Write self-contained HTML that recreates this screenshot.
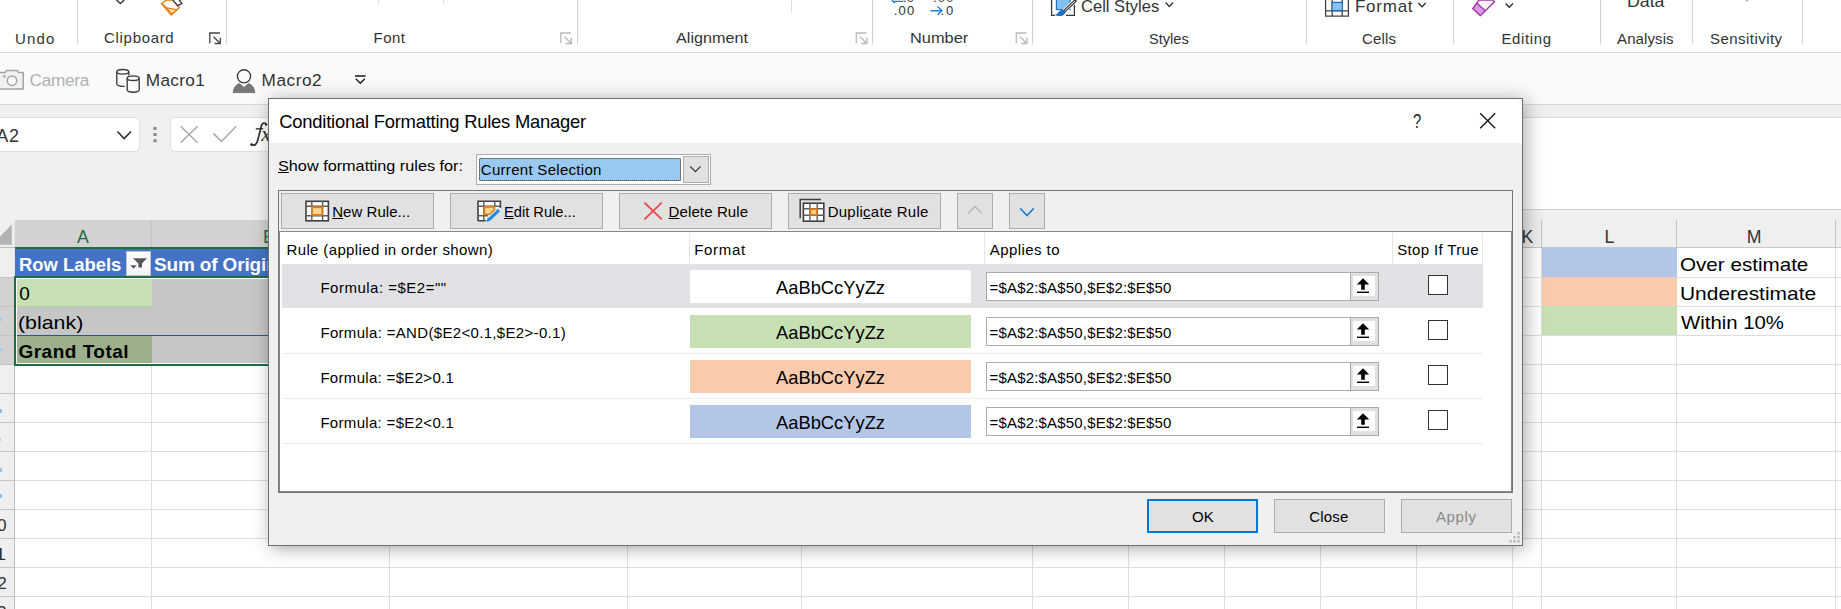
<!DOCTYPE html>
<html><head><meta charset="utf-8"><title>Conditional Formatting Rules Manager</title>
<style>
html,body{margin:0;padding:0;}
body{width:1841px;height:609px;overflow:hidden;position:relative;background:#fff;font-family:"Liberation Sans",sans-serif;}
.t{position:absolute;white-space:pre;}
.t u{text-decoration:underline;text-underline-offset:1px;text-decoration-thickness:1px;}
.a{position:absolute;box-sizing:border-box;}
.vs{position:absolute;width:1px;background:#d2d2d2;}
.hl{position:absolute;height:1px;}
.btn{position:absolute;box-sizing:border-box;background:#e1e1e1;border:1px solid #adadad;z-index:12;}
.fmt{position:absolute;left:690px;width:281px;height:33px;z-index:12;}
.inp{position:absolute;box-sizing:border-box;left:986px;width:393px;height:29px;border:1px solid #adadad;background:#fff;z-index:12;}
.ref{position:absolute;box-sizing:border-box;left:1350px;width:29px;height:29px;border:1.5px solid #a9a9a9;background:#e1e1e1;z-index:13;}
.ref i{position:absolute;left:1.5px;top:3.2px;width:22.3px;height:19.4px;background:#fff;}
.chk{position:absolute;box-sizing:border-box;left:1428px;width:20px;height:20px;border:1.4px solid #333;background:#fff;z-index:12;}
svg{position:absolute;overflow:visible;}

</style></head><body>
<!-- ===== Ribbon ===== -->
<div class="a" style="left:0;top:0;width:1841px;height:52px;background:#fff;"></div>
<div class="hl" style="left:0;top:52px;width:1841px;background:#dadada;"></div>
<div class="a" style="left:0;top:53px;width:1841px;height:51px;background:#fafafa;"></div>
<div class="hl" style="left:0;top:104px;width:1841px;background:#d8d8d8;"></div>
<div class="a" style="left:0;top:105px;width:1841px;height:115px;background:#f0f0f0;"></div>
<!-- group separators -->
<div class="vs" style="left:77px;top:0;height:44px;"></div>
<div class="vs" style="left:226px;top:0;height:44px;"></div>
<div class="vs" style="left:577px;top:0;height:44px;"></div>
<div class="vs" style="left:872px;top:0;height:44px;"></div>
<div class="vs" style="left:1032px;top:0;height:44px;"></div>
<div class="vs" style="left:1306px;top:0;height:44px;"></div>
<div class="vs" style="left:1453px;top:0;height:44px;"></div>
<div class="vs" style="left:1600px;top:0;height:44px;"></div>
<div class="vs" style="left:1692px;top:0;height:44px;"></div>
<div class="vs" style="left:1802px;top:0;height:44px;"></div>
<div class="vs" style="left:378px;top:0;height:5px;background:#e0e0e0;"></div>
<div class="vs" style="left:443px;top:0;height:5px;background:#e0e0e0;"></div>
<div class="vs" style="left:791px;top:0;height:13px;background:#e0e0e0;"></div>
<!-- ribbon icons -->
<svg style="left:0;top:0;" width="1841" height="53" viewBox="0 0 1841 53">
  <!-- chevron bottom (paste) -->
  <path d="M116.5 0 L120.4 3.6 L124.3 0" fill="none" stroke="#333" stroke-width="1.4"/>
  <!-- format painter -->
  <path d="M166.6 0 L161.5 3.5 L171.3 15 L179.4 7.4 L173.2 0 Z" fill="#fffaf2" stroke="#e07a10" stroke-width="1.35" stroke-linejoin="round"/>
  <path d="M166.8 7.7 L177 9.8 L171.4 14.4 Z" fill="#fbd79b" stroke="#e07a10" stroke-width="1.1" stroke-linejoin="round"/>
  <path d="M161.8 3.6 L166.8 7.7" fill="none" stroke="#e07a10" stroke-width="1.1"/>
  <path d="M172.8 0 L177.6 5.6 L181.9 3.4 L179.6 0.6 L180.6 0" fill="#fff" stroke="#3a3a3a" stroke-width="1.4"/>
  <!-- dialog launchers -->
  <g fill="none" stroke="#444" stroke-width="1.3">
    <path d="M220 33 H209.8 V43.2"/><path d="M213.5 36.7 L220.3 43.5 M220.3 37.8 V43.5 H214.6"/>
  </g>
  <g fill="none" stroke="#b9b9b9" stroke-width="1.3">
    <path d="M571 33 H560.8 V43.2"/><path d="M564.5 36.7 L571.3 43.5 M571.3 37.8 V43.5 H565.6"/>
    <path d="M866.5 33 H856.3 V43.2"/><path d="M860 36.7 L866.8 43.5 M866.8 37.8 V43.5 H861.1"/>
    <path d="M1026.5 33 H1016.3 V43.2"/><path d="M1020 36.7 L1026.8 43.5 M1026.8 37.8 V43.5 H1021.1"/>
  </g>
  <!-- number format arrows -->
  <path d="M891.8 0.2 L894.8 3 M892 1.4 H903.5" fill="none" stroke="#1e82d8" stroke-width="1.4"/>
  <path d="M930.4 10.8 H941.6 M937.6 6.6 L941.9 10.8 L937.6 15" fill="none" stroke="#1e82d8" stroke-width="1.4"/>
  <!-- cell styles icon -->
  <path d="M1051.6 0 V15.4 H1055 M1066 15.4 H1074.4 V4" fill="none" stroke="#3a3a3a" stroke-width="1.3"/>
  <rect x="1056.4" y="-1" width="13.6" height="10.6" fill="#83bdf0" stroke="#1e73c8" stroke-width="1.2"/>
  <path d="M1075 1 L1064.4 11.2" stroke="#fff" stroke-width="4.6" fill="none"/>
  <path d="M1075.2 0.8 L1064.4 11.2" stroke="#3a3a3a" stroke-width="3" fill="none" stroke-linecap="round"/>
  <path d="M1074.6 1.4 L1064.8 10.8" stroke="#f2f2f2" stroke-width="1" fill="none" stroke-linecap="round"/>
  <path d="M1065.4 12.4 C1064.5 16.4 1058 17.2 1054.6 14.6 C1058 14.4 1058.2 11.4 1061 10.2 C1063 9.6 1065.6 10.6 1065.4 12.4Z" fill="#1c6fc4"/>
  <path d="M1165.6 2.6 L1169.3 6.4 L1173 2.6" fill="none" stroke="#333" stroke-width="1.4"/>
  <!-- format icon -->
  <g stroke="#444" stroke-width="1.3" fill="none">
    <path d="M1325.6 0 V16.2 H1348.4 V0 M1332.2 0 V16.2 M1342.2 0 V16.2 M1325.6 10.8 H1348.4"/>
  </g>
  <rect x="1332" y="2.4" width="10.4" height="8.2" fill="#8cc3f0" stroke="#1e73c8" stroke-width="1.3"/>
  <path d="M1418.3 3 L1422 6.8 L1425.7 3" fill="none" stroke="#333" stroke-width="1.4"/>
  <!-- eraser -->
  <path d="M1479 0 L1472.8 8.6 L1480.4 15.6 L1494.6 1.8 L1492.6 0 Z" fill="#f4f4f4" stroke="#a437b1" stroke-width="1.4" stroke-linejoin="round"/>
  <path d="M1472.8 8.6 L1480.4 15.6 L1485.2 10.8 L1477 3.2 Z" fill="#d89de0" stroke="#a437b1" stroke-width="1.3" stroke-linejoin="round"/>
  <path d="M1505.6 3.4 L1509.3 7.2 L1513 3.4" fill="none" stroke="#333" stroke-width="1.4"/>
  <path d="M1745.6 0 L1747 1 L1748.4 0" fill="none" stroke="#bbb" stroke-width="1.2"/>
</svg>
<!-- ===== QAT icons ===== -->
<svg style="left:0;top:53px;" width="400" height="51" viewBox="0 53 400 51">
  <!-- camera -->
  <path d="M-2 72.6 H5 L6.6 70.4 H17 L18.6 72.6 H23.2 V89 H-2 Z" fill="#f1f1f1" stroke="#a3a3a3" stroke-width="1.5" stroke-linejoin="round"/>
  <circle cx="12" cy="80.7" r="4.7" fill="#fafafa" stroke="#a3a3a3" stroke-width="1.5"/>
  <rect x="3.2" y="75.2" width="2.3" height="2.3" fill="#a3a3a3"/>
  <!-- macro1: two cylinders -->
  <g fill="none" stroke="#3b3b3b" stroke-width="1.35">
    <path d="M116.8 71.8 V84 C116.8 85.8 120.6 86.6 124.6 86.4 M128.8 71.8 V75.2"/>
    <ellipse cx="122.8" cy="71.8" rx="6" ry="2.3"/>
    <path d="M127.2 78.2 V89.8 C127.2 93 139.2 93 139.2 89.8 V78.2"/>
    <ellipse cx="133.2" cy="78.2" rx="6" ry="2.3"/>
  </g>
  <!-- macro2: person -->
  <circle cx="244" cy="76.3" r="6.6" fill="#fafafa" stroke="#3b3b3b" stroke-width="1.35"/>
  <path d="M233.2 92.6 C233.6 88 235.6 85 239.4 83.6 L244 87.6 L248.6 83.6 C252.4 85 254.4 88 254.8 92.6 Z" fill="#777" stroke="#666" stroke-width="0.8" stroke-linejoin="round"/>
  <!-- qat dropdown -->
  <path d="M355 76 H365.6" stroke="#222" stroke-width="1.6" fill="none"/>
  <path d="M355.8 78.8 L360.3 83.2 L364.8 78.8" stroke="#222" stroke-width="1.5" fill="none"/>
</svg>
<!-- ===== Formula bar ===== -->
<div class="a" style="left:-10px;top:117px;width:150px;height:35px;background:#fff;border:1px solid #e0e0e0;border-radius:5px;"></div>
<div class="a" style="left:170px;top:117px;width:200px;height:35px;background:#fff;border:1px solid #e0e0e0;border-radius:5px;"></div>
<svg style="left:100px;top:108px;" width="180" height="52" viewBox="100 108 180 52">
  <path d="M117.4 131.6 L124.2 138.6 L131 131.6" fill="none" stroke="#2b2b2b" stroke-width="1.5"/>
  <rect x="153.4" y="127" width="3.2" height="3" fill="#8c8c8c"/><rect x="153.4" y="133" width="3.2" height="3" fill="#8c8c8c"/><rect x="153.4" y="139.2" width="3.2" height="3" fill="#8c8c8c"/>
  <path d="M180.6 126.2 L197.6 142.8 M197.6 126.2 L180.6 142.8" fill="none" stroke="#a8a8a8" stroke-width="1.5"/>
  <path d="M213.6 133.6 L221.4 141.4 L236.2 126.2" fill="none" stroke="#a8a8a8" stroke-width="1.5"/>
  <path d="M266.2 124.6 C265.6 122.4 262.2 122 261.2 126.4 L257.9 139.6 C256.8 144.2 254.6 146.4 251.6 144.6" fill="none" stroke="#2e2e2e" stroke-width="1.7" stroke-linecap="round"/>
  <circle cx="266" cy="124.5" r="1.25" fill="#2e2e2e"/><circle cx="251.5" cy="144.6" r="1.3" fill="#2e2e2e"/>
  <path d="M255.8 128.8 H263.2" stroke="#2e2e2e" stroke-width="1.3" fill="none"/>
</svg>
<!-- right side formula area -->
<div class="hl" style="left:1500px;top:117px;width:341px;background:#d9d9d9;"></div>
<div class="a" style="left:1500px;top:118px;width:341px;height:91px;background:#fff;"></div>
<div class="hl" style="left:1500px;top:209px;width:341px;background:#d0d0d0;"></div>
<!-- ===== Sheet ===== -->
<div class="a" style="left:0;top:220px;width:1841px;height:389px;background:#fff;"></div>
<!-- column header band -->
<div class="a" style="left:0;top:220px;width:1841px;height:28px;background:#efefef;"></div>
<div class="a" style="left:15px;top:220px;width:375px;height:27px;background:#d2d2d2;"></div>
<div class="hl" style="left:389px;top:247px;width:1452px;background:#c6c6c6;"></div>
<!-- row header band -->
<div class="a" style="left:0;top:248px;width:15px;height:361px;background:#efefef;"></div>
<div class="a" style="left:0;top:278px;width:15px;height:87px;background:#d2d2d2;"></div>
<div class="vs" style="left:14px;top:278px;height:331px;background:#bdbdbd;"></div>
<div class="vs" style="left:14px;top:220px;height:58px;background:#e6e6e6;"></div>
<div class="hl" style="left:0;top:247px;width:15px;background:#bcbcbc;"></div>
<div class="a" style="left:0;top:318px;width:2px;height:3px;background:#9ccbee;"></div>
<div class="a" style="left:0;top:348px;width:2px;height:3px;background:#9ccbee;"></div>
<div class="a" style="left:0;top:409px;width:2px;height:4px;background:#8cc4ee;"></div>
<div class="a" style="left:0;top:438px;width:1px;height:3px;background:#a8d2f0;"></div>
<div class="a" style="left:0;top:468px;width:2px;height:4px;background:#8cc4ee;"></div>
<div class="a" style="left:0;top:494px;width:2px;height:4px;background:#8cc4ee;"></div>
<svg style="left:0;top:220px;" width="16" height="28" viewBox="0 220 16 28"><path d="M11.8 224.6 V244.8 H-8.4 Z" fill="#b3b3b3"/></svg>
<div class="hl" style="left:15px;top:277px;width:1826px;background:#dedede;"></div>
<div class="hl" style="left:0;top:277px;width:14px;background:#c3c3c3;"></div>
<div class="hl" style="left:15px;top:306px;width:1826px;background:#dedede;"></div>
<div class="hl" style="left:0;top:306px;width:14px;background:#c3c3c3;"></div>
<div class="hl" style="left:15px;top:335px;width:1826px;background:#dedede;"></div>
<div class="hl" style="left:0;top:335px;width:14px;background:#c3c3c3;"></div>
<div class="hl" style="left:15px;top:364px;width:1826px;background:#dedede;"></div>
<div class="hl" style="left:0;top:364px;width:14px;background:#c3c3c3;"></div>
<div class="hl" style="left:15px;top:393px;width:1826px;background:#dedede;"></div>
<div class="hl" style="left:0;top:393px;width:14px;background:#c3c3c3;"></div>
<div class="hl" style="left:15px;top:422px;width:1826px;background:#dedede;"></div>
<div class="hl" style="left:0;top:422px;width:14px;background:#c3c3c3;"></div>
<div class="hl" style="left:15px;top:451px;width:1826px;background:#dedede;"></div>
<div class="hl" style="left:0;top:451px;width:14px;background:#c3c3c3;"></div>
<div class="hl" style="left:15px;top:480px;width:1826px;background:#dedede;"></div>
<div class="hl" style="left:0;top:480px;width:14px;background:#c3c3c3;"></div>
<div class="hl" style="left:15px;top:509px;width:1826px;background:#dedede;"></div>
<div class="hl" style="left:0;top:509px;width:14px;background:#c3c3c3;"></div>
<div class="hl" style="left:15px;top:538px;width:1826px;background:#dedede;"></div>
<div class="hl" style="left:0;top:538px;width:14px;background:#c3c3c3;"></div>
<div class="hl" style="left:15px;top:567px;width:1826px;background:#dedede;"></div>
<div class="hl" style="left:0;top:567px;width:14px;background:#c3c3c3;"></div>
<div class="hl" style="left:15px;top:596px;width:1826px;background:#dedede;"></div>
<div class="hl" style="left:0;top:596px;width:14px;background:#c3c3c3;"></div>
<div class="vs" style="left:151px;top:248px;height:361px;background:#dedede;"></div>
<div class="vs" style="left:389px;top:248px;height:361px;background:#dedede;"></div>
<div class="vs" style="left:627px;top:248px;height:361px;background:#dedede;"></div>
<div class="vs" style="left:801px;top:248px;height:361px;background:#dedede;"></div>
<div class="vs" style="left:1032px;top:248px;height:361px;background:#dedede;"></div>
<div class="vs" style="left:1128px;top:248px;height:361px;background:#dedede;"></div>
<div class="vs" style="left:1224px;top:248px;height:361px;background:#dedede;"></div>
<div class="vs" style="left:1320px;top:248px;height:361px;background:#dedede;"></div>
<div class="vs" style="left:1416px;top:248px;height:361px;background:#dedede;"></div>
<div class="vs" style="left:1512px;top:248px;height:361px;background:#dedede;"></div>
<div class="vs" style="left:1541px;top:248px;height:361px;background:#dedede;"></div>
<div class="vs" style="left:1676px;top:248px;height:361px;background:#dedede;"></div>
<div class="vs" style="left:1835px;top:248px;height:361px;background:#dedede;"></div>
<div class="vs" style="left:151px;top:220px;height:28px;background:#c4c4c4;"></div>
<div class="vs" style="left:389px;top:220px;height:28px;background:#c4c4c4;"></div>
<div class="vs" style="left:627px;top:220px;height:28px;background:#c4c4c4;"></div>
<div class="vs" style="left:801px;top:220px;height:28px;background:#c4c4c4;"></div>
<div class="vs" style="left:1032px;top:220px;height:28px;background:#c4c4c4;"></div>
<div class="vs" style="left:1128px;top:220px;height:28px;background:#c4c4c4;"></div>
<div class="vs" style="left:1224px;top:220px;height:28px;background:#c4c4c4;"></div>
<div class="vs" style="left:1320px;top:220px;height:28px;background:#c4c4c4;"></div>
<div class="vs" style="left:1416px;top:220px;height:28px;background:#c4c4c4;"></div>
<div class="vs" style="left:1512px;top:220px;height:28px;background:#c4c4c4;"></div>
<div class="vs" style="left:1541px;top:220px;height:28px;background:#c4c4c4;"></div>
<div class="vs" style="left:1676px;top:220px;height:28px;background:#c4c4c4;"></div>
<div class="vs" style="left:1835px;top:220px;height:28px;background:#c4c4c4;"></div>
<!-- cells -->
<div class="a" style="left:15px;top:249px;width:374px;height:27px;background:#4472c4;"></div>
<div class="a" style="left:15px;top:278px;width:374px;height:87px;background:#c6c6c6;"></div>
<div class="a" style="left:16px;top:279px;width:136px;height:27px;background:#c6e0b4;"></div>
<div class="hl" style="left:16px;top:306px;width:136px;background:#b7cfa6;"></div>
<div class="a" style="left:16px;top:336px;width:136px;height:28px;background:#9cb08d;"></div>
<div class="hl" style="left:16px;top:335px;width:373px;background:#31538f;"></div>
<!-- selection borders -->
<div class="a" style="left:15px;top:247px;width:374px;height:2px;background:#1e6e42;"></div>
<div class="a" style="left:14px;top:276px;width:376px;height:90px;border:2px solid #1e6e42;"></div>
<div class="a" style="left:16px;top:278px;width:372px;height:86px;border:1px solid #fff;border-right:none;"></div>
<!-- filter button -->
<div class="a" style="left:126px;top:251px;width:25px;height:25px;background:linear-gradient(#fff 40%,#eef0f6);border:1px solid #c4c4c4;"></div>
<svg style="left:126px;top:251px;" width="25" height="25" viewBox="126 251 25 25"><path d="M133 258.2 H147 L142 263.6 V267.6 H138.4 V263.6 Z" fill="#565656"/><path d="M130.2 265.2 H136.8 L133.5 268.8 Z" fill="#565656"/></svg>
<!-- legend cells -->
<div class="a" style="left:1542px;top:248px;width:135px;height:29px;background:#b4c6e7;"></div>
<div class="a" style="left:1542px;top:277px;width:135px;height:29px;background:#f8cbad;"></div>
<div class="a" style="left:1542px;top:306px;width:135px;height:29px;background:#c6e0b4;"></div>
<!-- ===== Dialog ===== -->
<div class="a" style="left:268px;top:98px;width:1255px;height:448px;background:#f0f0f0;border:1px solid #6e6e6e;z-index:10;box-shadow:2.5px 2px 18px 0 rgba(0,0,0,0.32),0 6px 10px -6px rgba(0,0,0,0.10);"></div>
<div class="a" style="left:269px;top:99px;width:1253px;height:44px;background:#fff;z-index:11;"></div>
<!-- close X -->
<svg style="left:1470px;top:105px;z-index:20;" width="40" height="30" viewBox="1470 105 40 30"><path d="M1480.2 113.3 L1495.2 128.3 M1495.2 113.3 L1480.2 128.3" stroke="#111" stroke-width="1.3" fill="none"/></svg>
<!-- combobox -->
<div class="a" style="left:476px;top:154px;width:235px;height:31px;background:#fff;border:1px solid #adadad;z-index:12;"></div>
<div class="a" style="left:479px;top:158px;width:202px;height:23px;background:#99c9ef;border-radius:1.5px;outline:1px dotted #40250a;outline-offset:-1px;z-index:13;"></div>
<div class="a" style="left:683px;top:156px;width:26px;height:27px;background:#e1e1e1;border:1px solid #adadad;z-index:13;"></div>
<svg style="left:683px;top:156px;z-index:14;" width="27" height="27" viewBox="683 156 27 27"><path d="M690.2 166.4 L695.4 171.6 L700.6 166.4" stroke="#333" stroke-width="1.3" fill="none"/></svg>
<!-- group frame -->
<div class="a" style="left:278px;top:190px;width:1235px;height:303px;border:1px solid #767676;background:#f0f0f0;z-index:11;"></div>
<div class="a" style="left:279px;top:231px;width:1233px;height:261px;background:#fff;border:1px solid #828790;z-index:11;"></div>
<!-- toolbar buttons -->
<div class="btn" style="left:281px;top:193px;width:153px;height:36px;"></div>
<div class="btn" style="left:450px;top:193px;width:153px;height:36px;"></div>
<div class="btn" style="left:619px;top:193px;width:153px;height:36px;"></div>
<div class="btn" style="left:788px;top:193px;width:153px;height:36px;"></div>
<div class="btn" style="left:957px;top:193px;width:36px;height:36px;"></div>
<div class="btn" style="left:1009px;top:193px;width:36px;height:36px;"></div>
<svg style="left:281px;top:193px;z-index:14;" width="770" height="36" viewBox="281 193 770 36">
  <!-- new rule icon -->
  <rect x="306" y="201.3" width="22.4" height="19.5" fill="#fff" stroke="#3f3f3f" stroke-width="1.6"/>
  <path d="M311.8 201.3 V220.8 M322.6 201.3 V220.8 M306 206.3 H328.4 M306 215.8 H328.4" stroke="#5c5c5c" stroke-width="1.4" fill="none"/>
  <rect x="312" y="207.2" width="10.2" height="7.8" fill="#fbd891" stroke="#e07b17" stroke-width="1.9"/>
  <!-- edit rule icon -->
  <path d="M478 201.3 H500.4 V207.5 L487.5 220.8 H478 Z" fill="#fff" stroke="none"/>
  <path d="M478 221 V201.3 H500.4 V208 M478 220.8 H487" fill="none" stroke="#3f3f3f" stroke-width="1.6"/>
  <path d="M483.8 201.3 V220.8 M494.8 201.3 V206 M478 206.3 H500.4 M478 215.8 H488" stroke="#5c5c5c" stroke-width="1.4" fill="none"/>
  <path d="M484.2 206.9 H494.4 V210 L489.8 214.4 H484.2 Z" fill="#fbd891" stroke="#e07b17" stroke-width="1.8"/>
  <path d="M497.6 208.2 L500.8 211.2 L490 221.4 L485.8 222.8 L486.9 218.4 Z" fill="#2b88d8" stroke="#fff" stroke-width="0.8"/>
  <path d="M488.6 217.6 L496.8 209.8" stroke="#cfe5f8" stroke-width="0.9" fill="none"/>
  <!-- delete X -->
  <path d="M644.4 202.6 L661.8 219.4 M661.8 202.6 L644.4 219.4" stroke="#e8474c" stroke-width="1.8" fill="none"/>
  <!-- duplicate icon -->
  <path d="M821 199.5 H800.2 V218.2" fill="none" stroke="#3f3f3f" stroke-width="1.5"/>
  <rect x="803.4" y="203.2" width="20.4" height="18" fill="#fff" stroke="#3f3f3f" stroke-width="1.6"/>
  <path d="M809.9 203.2 V221.2 M817.2 203.2 V221.2 M803.4 208.7 H823.8 M803.4 215.2 H823.8" stroke="#5c5c5c" stroke-width="1.4" fill="none"/>
  <rect x="810.4" y="209.2" width="6.4" height="5.6" fill="#fbd891" stroke="#e07b17" stroke-width="1.8"/>
  <!-- up/down -->
  <path d="M968 213.6 L975 206.6 L982 213.6" stroke="#b6b6b6" stroke-width="1.4" fill="none"/>
  <path d="M1020.2 208.4 L1027 215.6 L1033.8 208.4" stroke="#1e82d8" stroke-width="1.6" fill="none"/>
</svg>
<!-- list header separators -->
<div class="vs" style="left:689px;top:233px;height:31px;background:#e5e5e5;z-index:12;"></div>
<div class="vs" style="left:984px;top:233px;height:31px;background:#e5e5e5;z-index:12;"></div>
<div class="vs" style="left:1392px;top:233px;height:31px;background:#e5e5e5;z-index:12;"></div>
<div class="vs" style="left:1482px;top:233px;height:31px;background:#e5e5e5;z-index:12;"></div>
<!-- rows -->
<div class="a" style="left:282px;top:264px;width:1201px;height:44px;background:#e1e1e6;z-index:11;"></div>
<div class="hl" style="left:282px;top:353px;width:1201px;background:#ececec;z-index:12;"></div>
<div class="hl" style="left:282px;top:398px;width:1201px;background:#ececec;z-index:12;"></div>
<div class="hl" style="left:282px;top:443px;width:1201px;background:#ececec;z-index:12;"></div>
<div class="fmt" style="top:270px;background:#ffffff;"></div>
<div class="inp" style="top:272px;"></div><div class="ref" style="top:272px;"><i></i></div>
<svg style="left:1350px;top:272px;z-index:14;" width="29" height="29" viewBox="1350 272 29 29"><path d="M1363 278.2 L1369.2 284.6 H1364.8 V289.8 H1361.2 V284.6 H1356.8 Z" fill="#000"/><rect x="1357" y="291.6" width="12" height="1.4" fill="#000"/></svg>
<div class="chk" style="top:275px;"></div>
<div class="fmt" style="top:315px;background:#c6e0b4;"></div>
<div class="inp" style="top:317px;"></div><div class="ref" style="top:317px;"><i></i></div>
<svg style="left:1350px;top:317px;z-index:14;" width="29" height="29" viewBox="1350 272 29 29"><path d="M1363 278.2 L1369.2 284.6 H1364.8 V289.8 H1361.2 V284.6 H1356.8 Z" fill="#000"/><rect x="1357" y="291.6" width="12" height="1.4" fill="#000"/></svg>
<div class="chk" style="top:320px;"></div>
<div class="fmt" style="top:360px;background:#f8cbad;"></div>
<div class="inp" style="top:362px;"></div><div class="ref" style="top:362px;"><i></i></div>
<svg style="left:1350px;top:362px;z-index:14;" width="29" height="29" viewBox="1350 272 29 29"><path d="M1363 278.2 L1369.2 284.6 H1364.8 V289.8 H1361.2 V284.6 H1356.8 Z" fill="#000"/><rect x="1357" y="291.6" width="12" height="1.4" fill="#000"/></svg>
<div class="chk" style="top:365px;"></div>
<div class="fmt" style="top:405px;background:#b4c6e7;"></div>
<div class="inp" style="top:407px;"></div><div class="ref" style="top:407px;"><i></i></div>
<svg style="left:1350px;top:407px;z-index:14;" width="29" height="29" viewBox="1350 272 29 29"><path d="M1363 278.2 L1369.2 284.6 H1364.8 V289.8 H1361.2 V284.6 H1356.8 Z" fill="#000"/><rect x="1357" y="291.6" width="12" height="1.4" fill="#000"/></svg>
<div class="chk" style="top:410px;"></div>
<!-- bottom buttons -->
<div class="btn" style="left:1147px;top:499px;width:111px;height:34px;border:2px solid #0078d7;"></div>
<div class="btn" style="left:1274px;top:499px;width:111px;height:34px;"></div>
<div class="btn" style="left:1401px;top:499px;width:111px;height:34px;"></div>
<!-- resize grip -->
<svg style="left:1505px;top:528px;z-index:14;" width="17" height="17" viewBox="1505 528 17 17">
  <g fill="#bdbdbd"><rect x="1517.2" y="532" width="2.6" height="2.6"/><rect x="1513.2" y="536" width="2.6" height="2.6"/><rect x="1517.2" y="536" width="2.6" height="2.6"/><rect x="1509.3" y="540" width="2.6" height="2.6"/><rect x="1513.2" y="540" width="2.6" height="2.6"/><rect x="1517.2" y="540" width="2.6" height="2.6"/></g>
</svg>

<span class="t" style="left:14.95px;top:31px;font-size:15px;line-height:15px;color:#333;z-index:1;letter-spacing:1.184px;">Undo</span>
<span class="t" style="left:104.12px;top:30px;font-size:15px;line-height:15px;color:#333;z-index:1;letter-spacing:0.672px;">Clipboard</span>
<span class="t" style="left:373.50px;top:30px;font-size:15px;line-height:15px;color:#333;z-index:1;letter-spacing:0.468px;">Font</span>
<span class="t" style="left:676.27px;top:30px;font-size:15px;line-height:15px;color:#333;z-index:1;transform:scaleX(1.0792);transform-origin:0 0;">Alignment</span>
<span class="t" style="left:910.09px;top:30px;font-size:15px;line-height:15px;color:#333;z-index:1;transform:scaleX(1.0903);transform-origin:0 0;">Number</span>
<span class="t" style="left:1148.65px;top:31px;font-size:15px;line-height:15px;color:#333;z-index:1;transform:scaleX(0.9733);transform-origin:0 0;">Styles</span>
<span class="t" style="left:1362.12px;top:31px;font-size:15px;line-height:15px;color:#333;z-index:1;letter-spacing:0.147px;">Cells</span>
<span class="t" style="left:1501.50px;top:31px;font-size:15px;line-height:15px;color:#333;z-index:1;letter-spacing:0.617px;">Editing</span>
<span class="t" style="left:1617.08px;top:31px;font-size:15px;line-height:15px;color:#333;z-index:1;letter-spacing:0.094px;">Analysis</span>
<span class="t" style="left:1710.11px;top:31px;font-size:15px;line-height:15px;color:#333;z-index:1;letter-spacing:0.440px;">Sensitivity</span>
<span class="t" style="left:1080.62px;top:-2px;font-size:17px;line-height:17px;color:#333;z-index:1;transform:scaleX(0.9738);transform-origin:0 0;">Cell Styles</span>
<span class="t" style="left:1354.96px;top:-2px;font-size:17px;line-height:17px;color:#333;z-index:1;letter-spacing:0.759px;">Format</span>
<span class="t" style="left:1627.00px;top:-6px;font-size:16px;line-height:16px;color:#333;z-index:1;transform:scaleX(1.1074);transform-origin:0 0;">Data</span>
<span class="t" style="left:893.81px;top:4px;font-size:13px;line-height:13px;color:#333;z-index:1;letter-spacing:1.184px;">.00</span>
<span class="t" style="left:940.41px;top:4px;font-size:13px;line-height:13px;color:#333;z-index:1;letter-spacing:1.921px;">.0</span>
<span class="t" style="left:903.21px;top:-9px;font-size:13px;line-height:13px;color:#333;z-index:1;transform:scaleX(1.0081);transform-origin:0 0;">.0</span>
<span class="t" style="left:933.01px;top:-9px;font-size:13px;line-height:13px;color:#333;z-index:1;letter-spacing:1.184px;">.00</span>
<span class="t" style="left:29.61px;top:72px;font-size:17.2px;line-height:17.2px;color:#b1b1b1;z-index:1;letter-spacing:-0.281px;">Camera</span>
<span class="t" style="left:145.75px;top:72px;font-size:17.2px;line-height:17.2px;color:#333;z-index:1;letter-spacing:0.330px;">Macro1</span>
<span class="t" style="left:261.55px;top:72px;font-size:17.2px;line-height:17.2px;color:#333;z-index:1;letter-spacing:0.540px;">Macro2</span>
<span class="t" style="left:-3.82px;top:127px;font-size:18px;line-height:18px;color:#333;z-index:1;letter-spacing:0.730px;">A2</span>
<span class="t" style="left:261.25px;top:124px;font-size:21px;line-height:21px;font-style:italic;font-family:'Liberation Serif', serif;color:#2e2e2e;z-index:1;">x</span>
<span class="t" style="left:279.28px;top:113px;font-size:18.4px;line-height:18.4px;color:#000;z-index:20;letter-spacing:-0.228px;">Conditional Formatting Rules Manager</span>
<span class="t" style="left:277.94px;top:158px;font-size:15px;line-height:15px;color:#000;z-index:20;transform:scaleX(1.0824);transform-origin:0 0;"><u>S</u>how formatting rules for:</span>
<span class="t" style="left:480.82px;top:162px;font-size:15px;line-height:15px;color:#000;z-index:20;letter-spacing:0.292px;">Current Selection</span>
<span class="t" style="left:332.20px;top:204px;font-size:15px;line-height:15px;color:#000;z-index:20;letter-spacing:0.042px;"><u>N</u>ew Rule...</span>
<span class="t" style="left:504.31px;top:204px;font-size:15px;line-height:15px;color:#000;z-index:20;transform:scaleX(0.9773);transform-origin:0 0;"><u>E</u>dit Rule...</span>
<span class="t" style="left:668.50px;top:204px;font-size:15px;line-height:15px;color:#000;z-index:20;letter-spacing:0.124px;"><u>D</u>elete Rule</span>
<span class="t" style="left:827.70px;top:204px;font-size:15px;line-height:15px;color:#000;z-index:20;letter-spacing:0.237px;">Dupli<u>c</u>ate Rule</span>
<span class="t" style="left:286.50px;top:242px;font-size:15px;line-height:15px;color:#000;z-index:20;letter-spacing:0.365px;">Rule (applied in order shown)</span>
<span class="t" style="left:694.20px;top:242px;font-size:15px;line-height:15px;color:#000;z-index:20;letter-spacing:0.698px;">Format</span>
<span class="t" style="left:989.78px;top:242px;font-size:15px;line-height:15px;color:#000;z-index:20;letter-spacing:0.427px;">Applies to</span>
<span class="t" style="left:1397.21px;top:242px;font-size:15px;line-height:15px;color:#000;z-index:20;letter-spacing:0.351px;">Stop If True</span>
<span class="t" style="left:320.40px;top:280px;font-size:15px;line-height:15px;color:#000;z-index:20;letter-spacing:0.501px;">Formula: =$E2=&quot;&quot;</span>
<span class="t" style="left:775.78px;top:278px;font-size:19px;line-height:19px;color:#000;z-index:20;transform:scaleX(0.9650);transform-origin:0 0;">AaBbCcYyZz</span>
<span class="t" style="left:989.57px;top:280px;font-size:15px;line-height:15px;color:#000;z-index:20;letter-spacing:0.179px;">=$A$2:$A$50,$E$2:$E$50</span>
<span class="t" style="left:320.40px;top:325px;font-size:15px;line-height:15px;color:#000;z-index:20;letter-spacing:0.328px;">Formula: =AND($E2&lt;0.1,$E2&gt;-0.1)</span>
<span class="t" style="left:775.78px;top:323px;font-size:19px;line-height:19px;color:#000;z-index:20;transform:scaleX(0.9650);transform-origin:0 0;">AaBbCcYyZz</span>
<span class="t" style="left:989.57px;top:325px;font-size:15px;line-height:15px;color:#000;z-index:20;letter-spacing:0.179px;">=$A$2:$A$50,$E$2:$E$50</span>
<span class="t" style="left:320.40px;top:370px;font-size:15px;line-height:15px;color:#000;z-index:20;letter-spacing:0.317px;">Formula: =$E2&gt;0.1</span>
<span class="t" style="left:775.78px;top:368px;font-size:19px;line-height:19px;color:#000;z-index:20;transform:scaleX(0.9650);transform-origin:0 0;">AaBbCcYyZz</span>
<span class="t" style="left:989.57px;top:370px;font-size:15px;line-height:15px;color:#000;z-index:20;letter-spacing:0.179px;">=$A$2:$A$50,$E$2:$E$50</span>
<span class="t" style="left:320.40px;top:415px;font-size:15px;line-height:15px;color:#000;z-index:20;letter-spacing:0.317px;">Formula: =$E2&lt;0.1</span>
<span class="t" style="left:775.78px;top:413px;font-size:19px;line-height:19px;color:#000;z-index:20;transform:scaleX(0.9650);transform-origin:0 0;">AaBbCcYyZz</span>
<span class="t" style="left:989.57px;top:415px;font-size:15px;line-height:15px;color:#000;z-index:20;letter-spacing:0.179px;">=$A$2:$A$50,$E$2:$E$50</span>
<span class="t" style="left:1191.75px;top:509px;font-size:15px;line-height:15px;color:#000;z-index:20;transform:scaleX(1.0005);transform-origin:0 0;">OK</span>
<span class="t" style="left:1309.22px;top:509px;font-size:15px;line-height:15px;color:#000;z-index:20;letter-spacing:0.203px;">Close</span>
<span class="t" style="left:1435.98px;top:509px;font-size:15px;line-height:15px;color:#8a8a8a;z-index:20;letter-spacing:0.607px;">Apply</span>
<span class="t" style="left:1412.59px;top:110px;font-size:21px;line-height:21px;color:#222;z-index:20;transform:scaleX(0.7000);transform-origin:0 0;">?</span>
<span class="t" style="left:76.90px;top:229px;font-size:17.7px;line-height:17.7px;color:#1e6b41;z-index:1;">A</span>
<span class="t" style="left:263.00px;top:229px;font-size:17.7px;line-height:17.7px;color:#1e6b41;z-index:1;">B</span>
<span class="t" style="left:1521.60px;top:229px;font-size:17.7px;line-height:17.7px;color:#333;z-index:1;">K</span>
<span class="t" style="left:1604.40px;top:229px;font-size:17.7px;line-height:17.7px;color:#333;z-index:1;">L</span>
<span class="t" style="left:1746.80px;top:229px;font-size:17.7px;line-height:17.7px;color:#333;z-index:1;">M</span>
<span class="t" style="left:18.80px;top:255px;font-size:19px;line-height:19px;font-weight:700;color:#fff;z-index:1;transform:scaleX(0.9691);transform-origin:0 0;">Row Labels</span>
<span class="t" style="left:153.98px;top:255px;font-size:19px;line-height:19px;font-weight:700;color:#fff;z-index:1;letter-spacing:-0.146px;">Sum of Original</span>
<span class="t" style="left:19.15px;top:284px;font-size:19px;line-height:19px;color:#000;z-index:1;">0</span>
<span class="t" style="left:18.12px;top:313px;font-size:19px;line-height:19px;color:#000;z-index:1;transform:scaleX(1.1238);transform-origin:0 0;">(blank)</span>
<span class="t" style="left:18.45px;top:342px;font-size:19px;line-height:19px;font-weight:700;color:#000;z-index:1;letter-spacing:0.499px;">Grand Total</span>
<span class="t" style="left:1679.67px;top:255px;font-size:19px;line-height:19px;color:#000;z-index:1;transform:scaleX(1.0852);transform-origin:0 0;">Over estimate</span>
<span class="t" style="left:1679.67px;top:284px;font-size:19px;line-height:19px;color:#000;z-index:1;transform:scaleX(1.1016);transform-origin:0 0;">Underestimate</span>
<span class="t" style="left:1680.98px;top:313px;font-size:19px;line-height:19px;color:#000;z-index:1;transform:scaleX(1.0709);transform-origin:0 0;">Within 10%</span>
<span class="t" style="left:-15.36px;top:517px;font-size:17.2px;line-height:17.2px;color:#333;z-index:1;letter-spacing:2.785px;">10</span>
<span class="t" style="left:-15.66px;top:546px;font-size:17.2px;line-height:17.2px;color:#333;z-index:1;transform:scaleX(1.2516);transform-origin:0 0;">11</span>
<span class="t" style="left:-15.36px;top:575px;font-size:17.2px;line-height:17.2px;color:#333;z-index:1;letter-spacing:3.051px;">12</span>
<span class="t" style="left:-15.36px;top:604px;font-size:17.2px;line-height:17.2px;color:#333;z-index:1;letter-spacing:2.914px;">13</span>
</body></html>
